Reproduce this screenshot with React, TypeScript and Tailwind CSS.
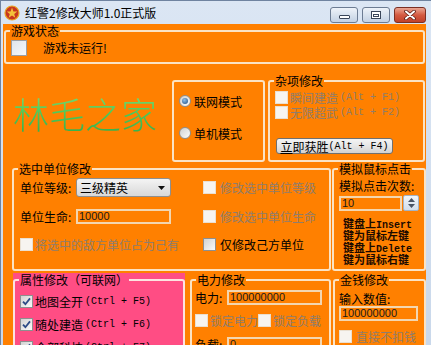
import React from 'react';

const cjk = "font-['Noto_Sans_CJK_SC',sans-serif]";
const mono = "font-['Liberation_Mono','Noto_Sans_CJK_SC',monospace] text-[10px]";
const dim = 'text-[#8f7d6c]';

function Check({ checked = false, disabled = false, big = false }: { checked?: boolean; disabled?: boolean; big?: boolean }) {
  const size = big ? 'w-[16px] h-[16px]' : 'w-[13px] h-[13px]';
  const look = disabled
    ? 'border-[#eadfd0] bg-[#f7f4f0]'
    : big
    ? 'border-[#9a9ea4] bg-linear-to-br from-[#dfe5ec] to-[#f6f8fb]'
    : 'border-[#8e8f8f] bg-linear-to-br from-[#d2d2d2] to-[#fbfbfb]';
  return (
    <span className={`${size} ${look} shrink-0 border flex items-center justify-center`}>
      {checked && (
        <svg width="9" height="9" viewBox="0 0 9 9">
          <path d="M1 4.6 L3.4 7.2 L8 1.4" fill="none" stroke="#2c4a86" strokeWidth="1.8" />
        </svg>
      )}
    </span>
  );
}

function Radio({ on = false }: { on?: boolean }) {
  return (
    <span className="w-[12px] h-[12px] shrink-0 rounded-full border border-[#8e8f8f] bg-linear-to-br from-[#d0d0d0] to-[#fcfcfc] flex items-center justify-center">
      {on && <span className="w-[6px] h-[6px] rounded-full bg-[radial-gradient(circle_at_40%_35%,#8fc1ea,#1c4a80)]" />}
    </span>
  );
}

function Group({ label, className = '', labelBg = 'bg-[#ff8000]', children }: { label?: string; className?: string; labelBg?: string; children?: React.ReactNode }) {
  return (
    <div className={`relative border-2 border-[#fbe3c4] rounded-[3px] ${className}`}>
      {label && (
        <span className={`absolute -top-[8px] left-[4px] px-[1px] text-[12px] leading-[13px] whitespace-nowrap ${labelBg}`}>{label}</span>
      )}
      {children}
    </div>
  );
}

function Field({ value, className = '' }: { value: string; className?: string }) {
  return (
    <div className={`border-2 border-[#f3d6b0] bg-[#ff8000] flex items-center pl-[1px] font-['Liberation_Sans',sans-serif] text-[11px] leading-[11px] text-[#1a1a1a] ${className}`}>
      {value}
    </div>
  );
}

export default function App() {
  return (
    <div className={`w-[431px] h-[345px] overflow-hidden flex flex-col bg-linear-to-b from-[#dbe6f4] to-[#c9d8eb] border-l border-t border-[#6f83a0] ${cjk} text-[12px] text-black`}>
      {/* title bar */}
      <div className="h-[23px] shrink-0 flex items-center pl-[3px]">
        <svg width="16" height="16" viewBox="0 0 16 16" className="shrink-0">
          <circle cx="8" cy="8" r="7" fill="#c8371f" stroke="#e9a521" strokeWidth="1.2" />
          <path d="M8 2.6 L9.4 6.4 L13.3 6.5 L10.2 8.9 L11.3 12.7 L8 10.5 L4.7 12.7 L5.8 8.9 L2.7 6.5 L6.6 6.4 Z" fill="#f4c23a" />
        </svg>
        <span className="ml-[5px] leading-[14px] whitespace-nowrap">红警2修改大师1.0正式版</span>
        <div className="ml-auto self-start mt-[6px] flex gap-[4px] pr-[5px]">
          <div className="w-[28px] h-[16px] rounded-[3px] border border-[#6c7c93] bg-linear-to-b from-[#eef3f9] to-[#c3d1e3] flex items-end justify-center pb-[3px]">
            <span className="w-[11px] h-[4px] border border-[#3b475a] bg-white rounded-[1px]" />
          </div>
          <div className="w-[28px] h-[16px] rounded-[3px] border border-[#6c7c93] bg-linear-to-b from-[#eef3f9] to-[#c3d1e3] flex items-center justify-center">
            <span className="w-[10px] h-[8px] border border-[#3b475a] bg-white flex items-center justify-center">
              <span className="w-[6px] h-[3px] border border-[#3b475a]" />
            </span>
          </div>
          <div className="w-[32px] h-[16px] rounded-[3px] border border-[#7a2f24] bg-linear-to-b from-[#e9a593] via-[#d45a41] to-[#c0402a] flex items-center justify-center">
            <svg width="12" height="10" viewBox="0 0 12 10">
              <path d="M2 1.5 L10 8.5 M10 1.5 L2 8.5" stroke="#5a1d14" strokeWidth="3.6" strokeLinecap="round" />
              <path d="M2 1.5 L10 8.5 M10 1.5 L2 8.5" stroke="#fff" strokeWidth="2" strokeLinecap="round" />
            </svg>
          </div>
        </div>
      </div>

      {/* client */}
      <div className="flex-1 ml-[2px] mr-[5px] bg-[#ff8000] flex flex-col">
        <Group label="游戏状态" className="mt-[6px] mx-[1px] h-[34px] shrink-0">
          <div className="flex items-center pl-[5px] pt-[8px]">
            <Check big />
            <span className="ml-[16px] leading-[16px]">游戏未运行!</span>
          </div>
        </Group>

        <div className="mt-[16px] flex h-[82px] shrink-0">
          <div className="w-[169px] pl-[10px] pt-[15px]">
            <span className="text-[36px] leading-[36px] font-light whitespace-nowrap bg-linear-to-b from-[#8ae27a] via-[#4cc95a] to-[#2ea84a] bg-clip-text text-transparent">林毛之家</span>
          </div>
          <Group className="w-[93px] h-[82px]">
            <div className="pl-[5px] pt-[12px] flex flex-col gap-[18px]">
              <div className="flex items-center h-[14px] gap-[3px] leading-[13px]">
                <Radio on />
                <span>联网模式</span>
              </div>
              <div className="flex items-center h-[14px] gap-[3px] leading-[13px]">
                <Radio />
                <span>单机模式</span>
              </div>
            </div>
          </Group>
          <Group label="杂项修改" className="ml-[3px] w-[157px] h-[82px]">
            <div className="pl-[5px] pt-[8px]">
              <div className={`flex items-center h-[15px] gap-[2px] leading-[13px] ${dim}`}>
                <Check disabled />
                <span>瞬间建造</span>
                <span className={mono}>(Alt + F1)</span>
              </div>
              <div className={`flex items-center h-[15px] gap-[2px] leading-[13px] ${dim}`}>
                <Check disabled />
                <span>无限超武</span>
                <span className={mono}>(Alt + F2)</span>
              </div>
              <div className="mt-[18px] ml-[1px] w-[117px] h-[16px] rounded-[3px] border border-[#707070] bg-linear-to-b from-[#f4f4f4] via-[#e6e6e6] to-[#d2d2d2] flex items-center justify-center leading-[13px]">
                <span className="underline underline-offset-[1px]">立</span>
                <span>即获胜</span>
                <span className={mono}>(Alt + F4)</span>
              </div>
            </div>
          </Group>
        </div>

        <div className="mt-[6px] flex h-[103px] shrink-0">
          <Group label="选中单位修改" className="ml-[9px] w-[319px] h-[103px]">
            <div className="pl-[6px] pt-[8px] leading-[13px]">
              <div className="flex h-[19px]">
                <div className="w-[183px] flex items-center">
                  <span className="w-[56px]">单位等级:</span>
                  <div className="w-[95px] h-[19px] rounded-[3px] border border-[#8e8f8f] bg-linear-to-b from-[#f4f4f4] to-[#d8d8d8] flex items-center pl-[3px] pr-[5px]">
                    <span>三级精英</span>
                    <svg width="7" height="4" viewBox="0 0 7 4" className="ml-auto">
                      <path d="M0 0 H7 L3.5 4 Z" fill="#111" />
                    </svg>
                  </div>
                </div>
                <div className={`flex items-center gap-[4px] ${dim}`}>
                  <Check disabled />
                  <span>修改选中单位等级</span>
                </div>
              </div>
              <div className="flex h-[16px] mt-[11px]">
                <div className="w-[183px] flex items-center">
                  <span className="w-[56px]">单位生命:</span>
                  <Field value="10000" className="w-[95px] h-[15px]" />
                </div>
                <div className={`flex items-center gap-[4px] ${dim}`}>
                  <Check disabled />
                  <span>修改选中单位生命</span>
                </div>
              </div>
              <div className="flex h-[13px] mt-[14px]">
                <div className={`w-[183px] flex items-center gap-[2px] ${dim}`}>
                  <Check disabled />
                  <span>将选中的敌方单位占为己有</span>
                </div>
                <div className="flex items-center gap-[4px]">
                  <Check />
                  <span>仅修改己方单位</span>
                </div>
              </div>
            </div>
          </Group>
          <Group label="模拟鼠标点击" className="ml-[1px] w-[94px] h-[103px]">
            <div className="pl-[5px] pt-[9px]">
              <div className="leading-[13px]">模拟点击次数:</div>
              <div className="mt-[3px] flex items-center">
                <Field value="10" className="w-[63px] h-[15px]" />
                <div className="ml-[1px] w-[16px] h-[16px] border border-[#a3b3c6] rounded-[2px] bg-linear-to-b from-[#f1f5fa] to-[#d3deeb] flex flex-col items-center justify-center gap-[2px]">
                  <svg width="7" height="4" viewBox="0 0 7 4"><path d="M0 4 H7 L3.5 0 Z" fill="#4a5566" /></svg>
                  <svg width="7" height="4" viewBox="0 0 7 4"><path d="M0 0 H7 L3.5 4 Z" fill="#4a5566" /></svg>
                </div>
              </div>
              <div className="mt-[6px] pl-[4px] text-[11px] leading-[12px] font-bold text-[#1a0a00] whitespace-nowrap">
                <div className="h-[12px]">键盘上<span className={mono}>Insert</span></div>
                <div className="h-[12px]">键为鼠标左键</div>
                <div className="h-[12px]">键盘上<span className={mono}>Delete</span></div>
                <div className="h-[12px]">键为鼠标右键</div>
              </div>
            </div>
          </Group>
        </div>

        <div className="mt-[2px] flex shrink-0">
          <div className="ml-[10px] w-[172px] h-[80px] bg-[#ff4d84] pt-[6px]">
            <Group label="属性修改（可联网）" labelBg="bg-[#ff4d84]" className="h-[80px] border-[#fde3e0]">
              <div className="pl-[5px] pt-[14px] flex flex-col gap-[10px] leading-[13px]">
                <div className="flex items-center h-[13px] gap-[2px]">
                  <Check checked />
                  <span>地图全开</span>
                  <span className={mono}>(Ctrl + F5)</span>
                </div>
                <div className="flex items-center h-[13px] gap-[2px]">
                  <Check checked />
                  <span>随处建造</span>
                  <span className={mono}>(Ctrl + F6)</span>
                </div>
                <div className="flex items-center h-[13px] gap-[2px]">
                  <Check checked />
                  <span>全部科技</span>
                  <span className={mono}>(Ctrl + F7)</span>
                </div>
              </div>
            </Group>
          </div>
          <Group label="电力修改" className="ml-[5px] mt-[6px] w-[141px] h-[80px]">
            <div className="pl-[3px] pt-[9px] leading-[13px]">
              <div className="flex items-center h-[15px]">
                <span className="w-[32px]">电力:</span>
                <Field value="100000000" className="w-[95px] h-[15px]" />
              </div>
              <div className={`flex items-center h-[13px] mt-[9px] ${dim}`}>
                <Check disabled />
                <span className="ml-[2px]">锁定电力</span>
                <Check disabled />
                <span className="ml-[2px]">锁定负载</span>
              </div>
              <div className="flex items-center h-[15px] mt-[10px]">
                <span className="w-[32px]">负载:</span>
                <Field value="0" className="w-[95px] h-[15px]" />
              </div>
            </div>
          </Group>
          <Group label="金钱修改" className="ml-[2px] mt-[6px] w-[93px] h-[80px]">
            <div className="pl-[4px] pt-[11px] leading-[13px]">
              <div>输入数值:</div>
              <Field value="100000000" className="mt-[1px] w-[79px] h-[15px]" />
              <div className={`flex items-center h-[13px] mt-[9px] gap-[4px] ${dim}`}>
                <Check disabled />
                <span>直接不扣钱</span>
              </div>
            </div>
          </Group>
        </div>
      </div>
    </div>
  );
}
